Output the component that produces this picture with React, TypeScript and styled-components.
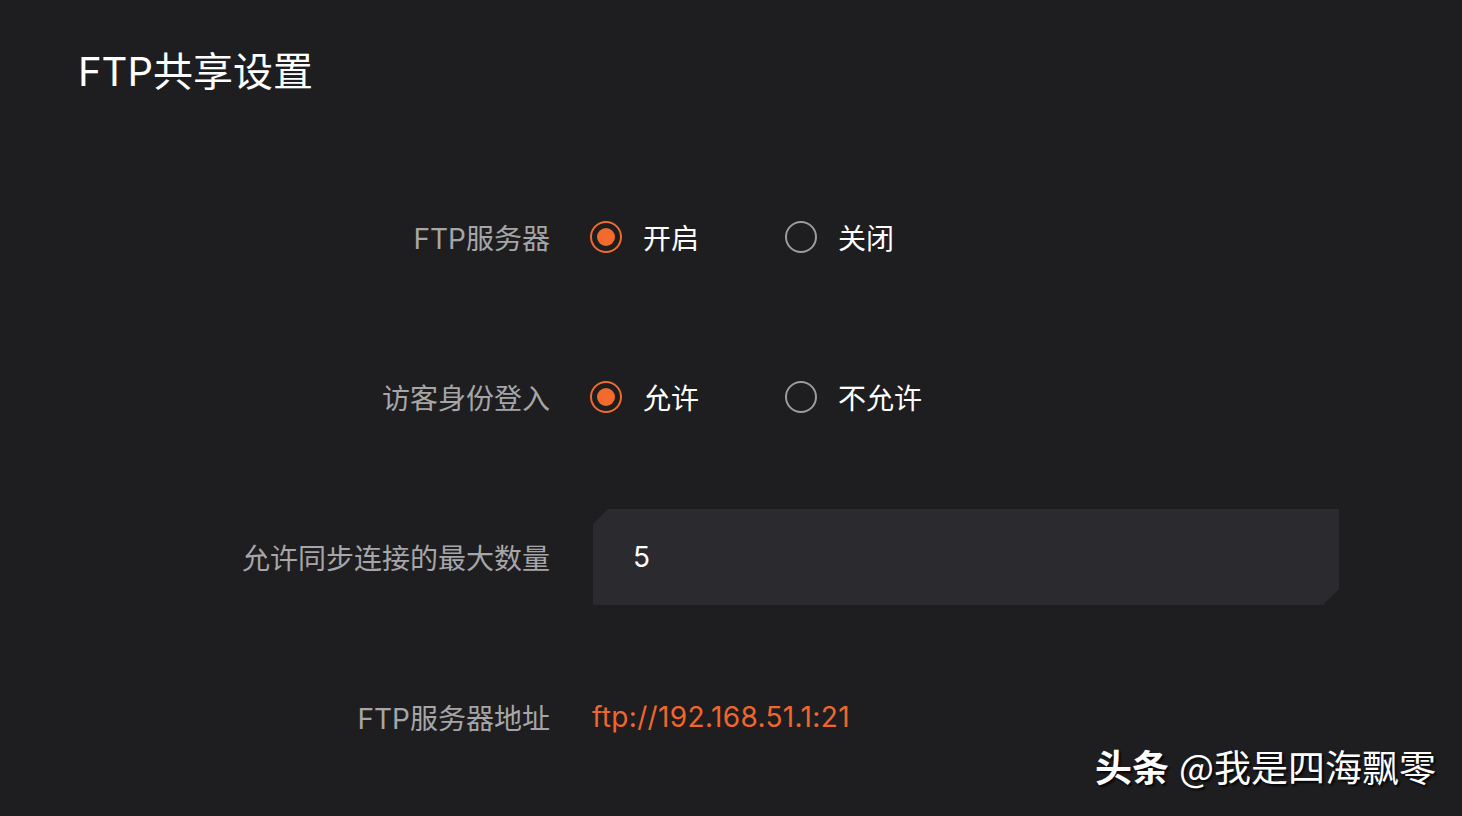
import React, { useState } from 'react';
import styled, { createGlobalStyle } from 'styled-components';

const GlobalStyle = createGlobalStyle`
  html, body {
    margin: 0;
    padding: 0;
    background: #1e1e20;
  }
  body {
    font-family: 'Inter', 'Noto Sans CJK SC', sans-serif;
  }
`;

const Page = styled.div`
  position: relative;
  width: 1462px;
  height: 816px;
  box-sizing: border-box;
  padding: 52px 0 0 78px;
  background: #1e1e20;
  overflow: hidden;
`;

const Title = styled.h1`
  margin: 0;
  font-size: 40px;
  line-height: 40px;
  font-weight: 400;
  color: #ffffff;
`;

const Form = styled.div`
  display: grid;
  grid-template-columns: 472px 746px;
  grid-auto-rows: 96px;
  column-gap: 40px;
  row-gap: 64px;
  margin-top: 97px;
  align-items: center;
`;

const Label = styled.div`
  text-align: right;
  font-size: 28px;
  color: #a6a6a8;
`;

const RadioGroup = styled.div`
  display: flex;
  align-items: center;
  gap: 86px;
`;

const Option = styled.label`
  display: flex;
  align-items: center;
  gap: 21px;
  cursor: pointer;
  font-size: 28px;
  color: #ffffff;
`;

const Ring = styled.span<{ $on: boolean }>`
  box-sizing: border-box;
  width: 32px;
  height: 32px;
  border-radius: 50%;
  border: 2.5px solid ${p => (p.$on ? '#f26a2e' : '#9c9c9e')};
  display: flex;
  align-items: center;
  justify-content: center;

  &::after {
    content: '';
    width: 18px;
    height: 18px;
    border-radius: 50%;
    background: #f26a2e;
    display: ${p => (p.$on ? 'block' : 'none')};
  }
`;

const InputBox = styled.input`
  box-sizing: border-box;
  width: 746px;
  height: 96px;
  margin-left: 3px;
  padding: 0 0 0 40px;
  border: none;
  outline: none;
  background: #2a2a2f;
  color: #ffffff;
  font-family: 'Inter', 'Noto Sans CJK SC', sans-serif;
  font-size: 28px;
  clip-path: polygon(15px 0, 100% 0, 100% calc(100% - 16px), calc(100% - 16px) 100%, 0 100%, 0 15px);
`;

const Address = styled.div`
  margin-left: 2px;
  font-size: 28px;
  letter-spacing: 0.35px;
  color: #f0662c;
`;

const Watermark = styled.div`
  position: absolute;
  right: 26px;
  bottom: 23px;
  font-family: 'Noto Sans CJK SC', sans-serif;
  font-size: 37px;
  color: #ffffff;
  text-shadow: 2px 2px 2px rgba(0, 0, 0, 0.8);

  b {
    font-weight: 700;
    margin-right: 10px;
  }
`;

interface RadioProps {
  options: string[];
  value: number;
  onChange: (i: number) => void;
}

const Radio: React.FC<RadioProps> = ({ options, value, onChange }) => (
  <RadioGroup>
    {options.map((opt, i) => (
      <Option key={opt} onClick={() => onChange(i)}>
        <Ring $on={value === i} />
        {opt}
      </Option>
    ))}
  </RadioGroup>
);

export default function App() {
  const [server, setServer] = useState(0);
  const [guest, setGuest] = useState(0);
  const [max, setMax] = useState('5');

  return (
    <Page>
      <GlobalStyle />
      <Title>FTP共享设置</Title>
      <Form>
        <Label>FTP服务器</Label>
        <Radio options={['开启', '关闭']} value={server} onChange={setServer} />

        <Label>访客身份登入</Label>
        <Radio options={['允许', '不允许']} value={guest} onChange={setGuest} />

        <Label>允许同步连接的最大数量</Label>
        <InputBox value={max} onChange={e => setMax(e.target.value)} />

        <Label>FTP服务器地址</Label>
        <Address>ftp://192.168.51.1:21</Address>
      </Form>
      <Watermark>
        <b>头条</b>@我是四海飘零
      </Watermark>
    </Page>
  );
}
